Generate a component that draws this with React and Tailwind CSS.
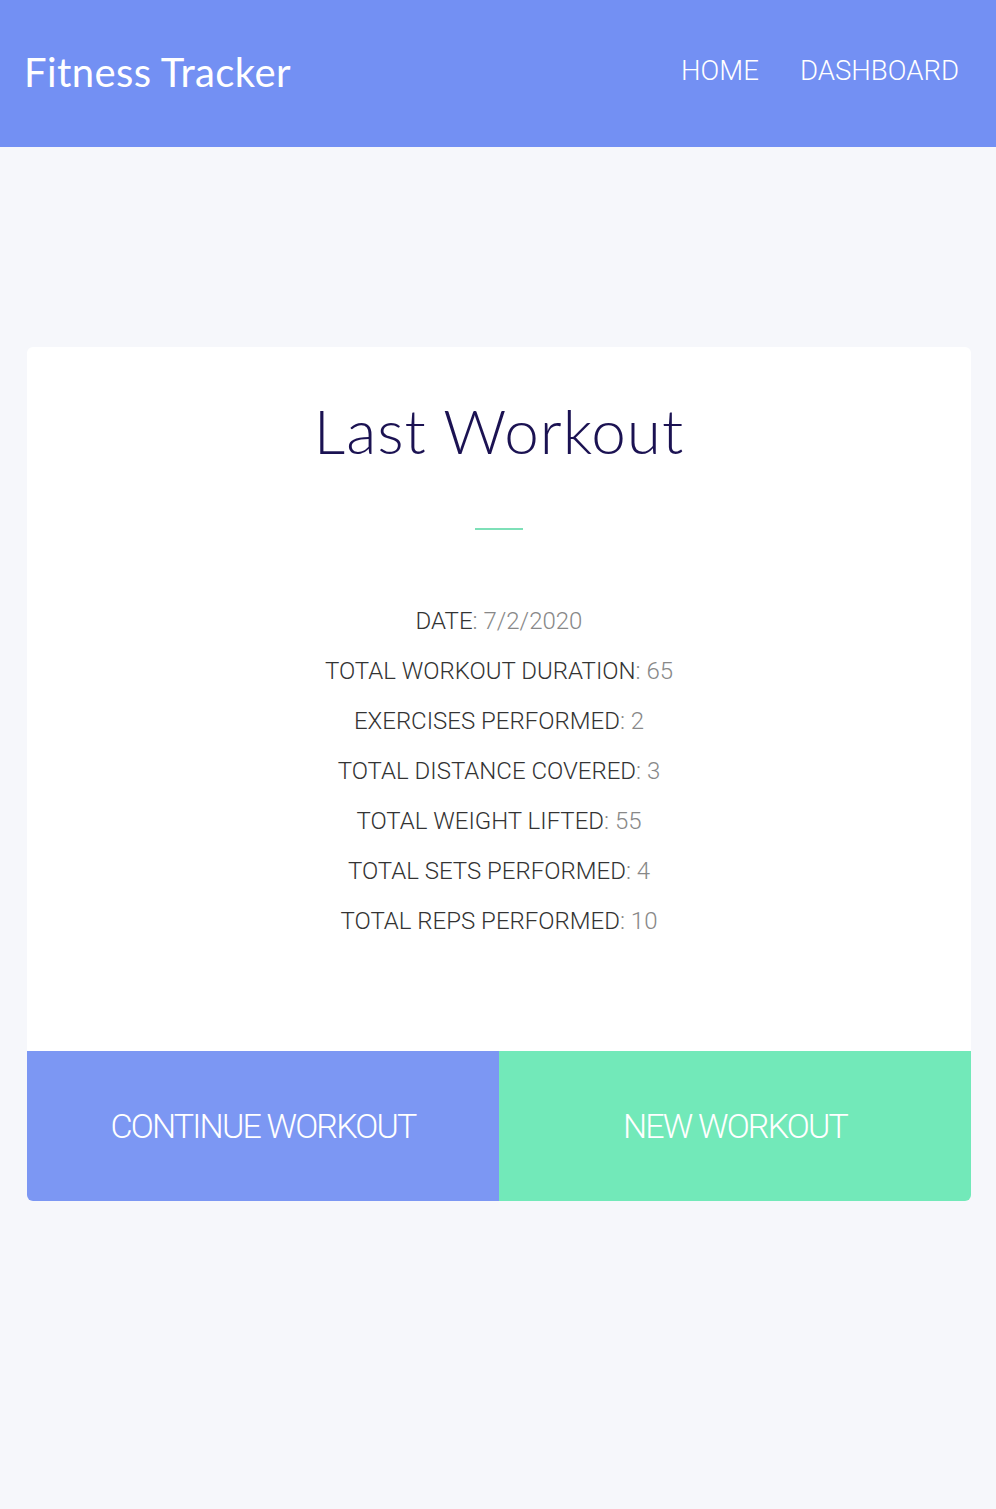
export default function App() {
  const stats = [
    ["DATE", "7/2/2020"],
    ["TOTAL WORKOUT DURATION", "65"],
    ["EXERCISES PERFORMED", "2"],
    ["TOTAL DISTANCE COVERED", "3"],
    ["TOTAL WEIGHT LIFTED", "55"],
    ["TOTAL SETS PERFORMED", "4"],
    ["TOTAL REPS PERFORMED", "10"],
  ];

  return (
    <div className="min-h-[1509px] bg-[#f6f7fb] font-['Roboto',sans-serif]">
      <header className="h-[147px] bg-[#7390f3] flex items-center justify-between pl-6 pr-[37px]">
        <h1 className="text-white text-[40px] font-['Lato',sans-serif] tracking-[0.4px] -mt-[4px]">Fitness Tracker</h1>
        <nav className="flex gap-[41px] text-white text-[27.6px] font-light -mt-[6px]">
          <a>HOME</a>
          <a>DASHBOARD</a>
        </nav>
      </header>

      <main className="pl-[27px] pr-[25px] pt-[200px]">
        <div className="bg-white rounded-md overflow-hidden">
          <div className="h-[704px] flex flex-col items-center">
            <h2 className="mt-[47px] text-[62px] leading-[72px] text-[#1b1252] font-['Lato',sans-serif] font-light tracking-[1px]">
              Last Workout
            </h2>
            <div className="mt-[62px] w-12 h-[2px] bg-[#7ee0b8]" />
            <ul className="mt-[77px] flex flex-col items-center gap-[22px] text-[24px] leading-[28px] font-light">
              {stats.map(([label, value]) => (
                <li key={label}>
                  <span className="text-[#333]">{label}</span>
                  <span className="text-[#888]">: {value}</span>
                </li>
              ))}
            </ul>
          </div>
          <div className="grid grid-cols-2 h-[150px] text-white text-[34px] font-light tracking-[-1.8px]">
            <button className="bg-[#7c97f3] flex items-center justify-center">CONTINUE WORKOUT</button>
            <button className="bg-[#72e9b9] flex items-center justify-center">NEW WORKOUT</button>
          </div>
        </div>
      </main>
    </div>
  );
}
